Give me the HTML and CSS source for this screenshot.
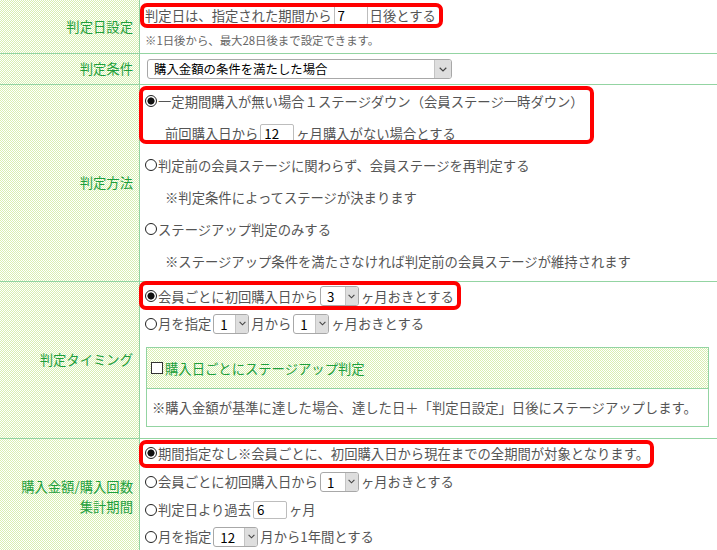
FILE: index.html
```html
<!DOCTYPE html>
<html lang="ja">
<head>
    <meta charset="UTF-8">
    <meta name="viewport" content="width=device-width, initial-scale=1.0">
    <title>会員ステージ判定設定</title>
    <link rel="stylesheet" href="styles.css">
</head>
<body>
    <table class="settings">
        <!-- 判定日設定 -->
        <tr>
            <th>判定日設定</th>
            <td class="cell-date">
                <div class="line hl hl-date">判定日は、指定された期間から<input type="text" class="num num-date" value="7">日後とする</div>
                <p class="hint">※1日後から、最大28日後まで設定できます。</p>
            </td>
        </tr>

        <!-- 判定条件 -->
        <tr>
            <th>判定条件</th>
            <td class="cell-cond">
                <div class="line">
                    <span class="sel sel-wide">
                        <select>
                            <option>購入金額の条件を満たした場合</option>
                            <option>購入回数の条件を満たした場合</option>
                        </select>
                        <span class="arw"><svg width="8" height="5" viewBox="0 0 8 5"><path d="M0.7 0.8 L4 4 L7.3 0.8" fill="none" stroke="#444" stroke-width="1.2"/></svg></span>
                    </span>
                </div>
            </td>
        </tr>

        <!-- 判定方法 -->
        <tr>
            <th>判定方法</th>
            <td class="cell-method">
                <div class="hl hl-method">
                    <label class="opt"><input type="radio" name="method" checked>一定期間購入が無い場合１ステージダウン（会員ステージ一時ダウン）</label>
                    <div class="opt sub">前回購入日から<input type="text" class="num" value="12">ヶ月購入がない場合とする</div>
                </div>
                <label class="opt"><input type="radio" name="method">判定前の会員ステージに関わらず、会員ステージを再判定する</label>
                <div class="opt sub">※判定条件によってステージが決まります</div>
                <label class="opt"><input type="radio" name="method">ステージアップ判定のみする</label>
                <div class="opt sub">※ステージアップ条件を満たさなければ判定前の会員ステージが維持されます</div>
            </td>
        </tr>

        <!-- 判定タイミング -->
        <tr>
            <th>判定タイミング</th>
            <td class="cell-timing">
                <label class="opt opt-t1 hl hl-timing"><input type="radio" name="timing" checked>会員ごとに初回購入日から<span class="sel sel-s"><select><option>3</option></select><span class="arw"><svg width="7" height="5" viewBox="0 0 7 5"><path d="M0.6 0.8 L3.5 3.8 L6.4 0.8" fill="none" stroke="#444" stroke-width="1.1"/></svg></span></span>ヶ月おきとする</label>
                <label class="opt opt-t2"><input type="radio" name="timing">月を指定<span class="sel sel-xs"><select><option>1</option></select><span class="arw"><svg width="7" height="5" viewBox="0 0 7 5"><path d="M0.6 0.8 L3.5 3.8 L6.4 0.8" fill="none" stroke="#444" stroke-width="1.1"/></svg></span></span>月から<span class="sel sel-xs"><select><option>1</option></select><span class="arw"><svg width="7" height="5" viewBox="0 0 7 5"><path d="M0.6 0.8 L3.5 3.8 L6.4 0.8" fill="none" stroke="#444" stroke-width="1.1"/></svg></span></span>ヶ月おきとする</label>

                <div class="stepbox">
                    <div class="stepbox-head">
                        <label class="check"><input type="checkbox">購入日ごとにステージアップ判定</label>
                    </div>
                    <div class="stepbox-body">※購入金額が基準に達した場合、達した日＋「判定日設定」日後にステージアップします。</div>
                </div>
            </td>
        </tr>

        <!-- 集計期間 -->
        <tr>
            <th>購入金額/購入回数<br>集計期間</th>
            <td class="cell-period">
                <label class="opt opt-p1 hl hl-period"><input type="radio" name="period" checked>期間指定なし※会員ごとに、初回購入日から現在までの全期間が対象となります。</label>
                <label class="opt opt-p2"><input type="radio" name="period">会員ごとに初回購入日から<span class="sel sel-s"><select><option>1</option></select><span class="arw"><svg width="7" height="5" viewBox="0 0 7 5"><path d="M0.6 0.8 L3.5 3.8 L6.4 0.8" fill="none" stroke="#444" stroke-width="1.1"/></svg></span></span>ヶ月おきとする</label>
                <label class="opt opt-p3"><input type="radio" name="period">判定日より過去<input type="text" class="num" value="6">ヶ月</label>
                <label class="opt opt-p3"><input type="radio" name="period">月を指定<span class="sel sel-m"><select><option>12</option></select><span class="arw"><svg width="7" height="5" viewBox="0 0 7 5"><path d="M0.6 0.8 L3.5 3.8 L6.4 0.8" fill="none" stroke="#444" stroke-width="1.1"/></svg></span></span>月から1年間とする</label>
            </td>
        </tr>
    </table>
</body>
</html>
```

FILE: styles.css
```css
body {
    margin: 0;
    padding: 0;
    font-family: "Noto Sans CJK JP", "Noto Sans", sans-serif;
    font-size: 13.33px;
    color: #555;
    background: #fff;
}
.settings {
    width: 100%;
    table-layout: fixed;
    border-collapse: separate;
    border-spacing: 0;
}
.settings th,
.settings td {
    border-bottom: 1px solid #93d4a2;
}
.settings th {
    box-sizing: border-box;
    width: 140px;
    padding: 0 6px 0 0;
    border-right: 1px solid #93d4a2;
    text-align: right;
    vertical-align: middle;
    font-weight: normal;
    line-height: 20px;
    color: #1e9f3c;
    background: repeating-conic-gradient(#d8efb0 0 25%, #fff 0 50%) 0 0 / 2px 2px;
}
.settings td {
    padding: 0 5px;
    vertical-align: top;
}

/* rows */
.settings .cell-date {
    padding: 3px 5px 4px;
}
.settings .cell-cond {
    padding: 5px 5px;
}
.settings .cell-method {
    padding-bottom: 4px;
}
.settings .cell-timing {
    padding-bottom: 11px;
}
.settings .cell-period {
    padding-bottom: 4px;
}
.line {
    display: flex;
    align-items: center;
    height: 24px;
}
.cell-cond .line {
    height: 20px;
}
.hint {
    margin: 4px 0 0;
    height: 18px;
    line-height: 18px;
    font-size: 11.4px;
    color: #666;
}

/* options */
.opt {
    display: flex;
    align-items: center;
    height: 32px;
    white-space: nowrap;
}
.opt.sub {
    padding-left: 20px;
}
.opt-t1 { height: 28px; }
.opt-t2 { height: 27px; }
.opt-p1 { height: 28px; }
.opt-p2 { height: 29px; }
.opt-p3 { height: 27px; }

input[type="radio"] {
    appearance: none;
    flex: none;
    box-sizing: border-box;
    width: 12px;
    height: 12px;
    margin: 0 1px 0 0;
    border: 1.4px solid #222;
    border-radius: 50%;
    background: #fff;
}
input[type="radio"]:checked {
    background: radial-gradient(circle, #111 0 3.2px, #fff 3.9px);
}
input[type="checkbox"] {
    appearance: none;
    flex: none;
    box-sizing: border-box;
    width: 12px;
    height: 12px;
    margin: 0 2px 0 0;
    border: 1.5px solid #333;
    background: #fff;
}

/* text inputs */
.num {
    box-sizing: border-box;
    width: 34px;
    height: 18px;
    margin: 0 2px;
    padding: 0 3px;
    border: 1px solid #bdbdbd;
    border-radius: 2px;
    font: inherit;
    color: #000;
    background: #fff;
}
.num-date {
    height: 20px;
}

/* selects */
.sel {
    display: inline-flex;
    flex: none;
    box-sizing: border-box;
    height: 20px;
    margin: 0 2px;
    border: 1px solid #a8a8a8;
    border-radius: 3px;
    overflow: hidden;
    background: #fff;
}
.sel select {
    appearance: none;
    box-sizing: border-box;
    height: 100%;
    margin: 0;
    padding: 0 0 0 6px;
    border: 0;
    outline: 0;
    background: transparent;
    font: inherit;
    color: #000;
}
.sel .arw {
    box-sizing: border-box;
    display: flex;
    align-items: center;
    justify-content: center;
    width: 13px;
    border-left: 1px solid #c4c4c4;
    background: #dedede;
}
.sel-wide {
    width: 305px;
    margin-left: 2px;
}
.sel-wide select {
    flex: 1;
    font-size: 12.4px;
}
.sel-wide .arw {
    width: 17px;
}
.sel-xs select { width: 21px; }
.sel-s select { width: 24px; }
.sel-m select { width: 30px; }

/* red highlight frames */
.hl {
    position: relative;
    width: fit-content;
}
.hl::after {
    content: "";
    position: absolute;
    top: 0;
    bottom: 0;
    left: -6px;
    right: -7px;
    border: 4px solid #f00;
    border-radius: 7px;
    pointer-events: none;
}
.hl-date::after {
    left: -5px;
    bottom: -1px;
}
.hl-method::after {
    top: 1px;
    bottom: 5px;
    right: -10px;
}
.hl-timing::after {
    top: -1px;
}
.hl-period::after {
    top: 1px;
    bottom: -1px;
    right: -5px;
}

/* step-up box */
.stepbox {
    margin: 10px 3px 0 1px;
    border: 1px solid #93d4a2;
}
.stepbox-head {
    display: flex;
    align-items: center;
    height: 40px;
    padding-left: 4px;
    border-bottom: 1px solid #93d4a2;
    background: repeating-conic-gradient(#d8efb0 0 25%, #fff 0 50%) 0 0 / 2px 2px;
}
.check {
    display: flex;
    align-items: center;
    color: #1e9f3c;
}
.stepbox-body {
    display: flex;
    align-items: center;
    height: 37px;
    padding-left: 5px;
    white-space: nowrap;
}
```
